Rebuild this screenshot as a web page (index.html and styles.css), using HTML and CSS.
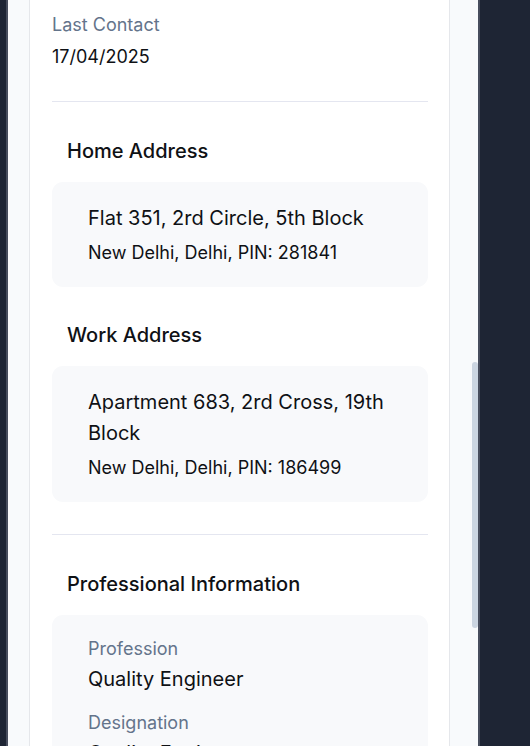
FILE: index.html
```html
<!DOCTYPE html>
<html lang="en">
<head>
<meta charset="utf-8">
<title>Contact Details</title>
<link rel="stylesheet" href="styles.css">
</head>
<body>
<div class="panel">
  <div class="card">
    <div class="field field-top">
      <div class="label">Last Contact</div>
      <div class="value">17/04/2025</div>
    </div>
    <hr class="divider">
    <section class="section">
      <h3 class="section-title">Home Address</h3>
      <div class="box">
        <div class="addr-line">Flat 351, 2rd Circle, 5th Block</div>
        <div class="addr-city">New Delhi, Delhi, PIN: 281841</div>
      </div>
    </section>
    <section class="section section-second">
      <h3 class="section-title">Work Address</h3>
      <div class="box">
        <div class="addr-line">Apartment 683, 2rd Cross, 19th Block</div>
        <div class="addr-city">New Delhi, Delhi, PIN: 186499</div>
      </div>
    </section>
    <hr class="divider divider-2">
    <section class="section">
      <h3 class="section-title">Professional Information</h3>
      <div class="box box-info">
        <div class="field">
          <div class="label">Profession</div>
          <div class="value">Quality Engineer</div>
        </div>
        <div class="field">
          <div class="label">Designation</div>
          <div class="value">Quality Engineer</div>
        </div>
      </div>
    </section>
  </div>
  <div class="track"><div class="thumb"></div></div>
</div>
</body>
</html>
```

FILE: styles.css
```css
html, body {
  margin: 0;
  height: 746px;
  overflow: hidden;
}
body {
  background: #1e2534;
  padding-left: 6px;
  font-family: Inter, "Noto Sans", "Liberation Sans", sans-serif;
  color: #0f1115;
}
.panel {
  width: 449px;
  height: 746px;
  background: #f8fafc;
  border-left: 2px solid #474d5d;
  border-right: 2px solid #474d5d;
  display: flex;
  padding-left: 21px;
}
.card {
  width: 421px;
  flex: none;
  background: #ffffff;
  border: 1px solid #e5e7eb;
  border-top: none;
  border-bottom: none;
  padding: 0 21px 0 22px;
  box-sizing: border-box;
}
.track {
  width: 6px;
  margin-left: 22px;
  flex: none;
}
.thumb {
  margin-top: 362px;
  height: 266px;
  background: #cbd5e1;
  border-radius: 3px;
}
.field-top {
  padding-top: 13px;
}
.label {
  font-size: 18px;
  line-height: 24px;
  color: #64748b;
}
.value {
  font-size: 20px;
  line-height: 28px;
  margin-top: 6px;
  color: #0f1115;
}
.field-top .value {
  font-size: 18px;
}
.divider {
  border: none;
  border-top: 1px solid #e4e6f0;
  margin: 30px 0 0;
  height: 0;
}
.divider-2 {
  margin-top: 32px;
}
.section {
  padding-top: 35px;
}
.section-second {
  padding-top: 34px;
}
.section-title {
  margin: 0 0 17px 15px;
  font-size: 20px;
  line-height: 28px;
  font-weight: 500;
  color: #0f1115;
}
.box {
  background: #f8f9fb;
  border-radius: 11px;
  padding: 21px 36px 22px;
}
.addr-line {
  font-size: 20px;
  line-height: 31px;
}
.addr-city {
  font-size: 18px;
  line-height: 24px;
  margin-top: 7px;
}
.box-info {
  padding-top: 22px;
}
.box-info .field + .field {
  margin-top: 18px;
}
.box-info .value {
  margin-top: 4px;
}
```
